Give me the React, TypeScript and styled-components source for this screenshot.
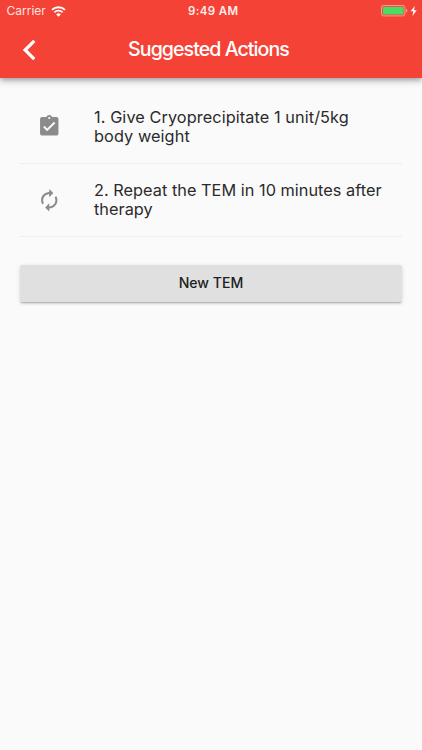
import React from "react";
import styled, { createGlobalStyle } from "styled-components";

const GlobalStyle = createGlobalStyle`
  * { box-sizing: border-box; }
  body { margin: 0; background: #fafafa; font-family: Inter, "Liberation Sans", sans-serif; }
`;

const Screen = styled.div`
  width: 422px;
  height: 750px;
  background: #fafafa;
  overflow: hidden;
`;

const Header = styled.header`
  height: 77.6px;
  background: #f44336;
  color: #fff;
  box-shadow: 0 2px 4px -1px rgba(0, 0, 0, 0.2), 0 4px 5px rgba(0, 0, 0, 0.14), 0 1px 10px rgba(0, 0, 0, 0.12);
`;

const StatusBar = styled.div`
  height: 21px;
  display: grid;
  grid-template-columns: 1fr auto 1fr;
  align-items: center;
  padding: 1px 4px 0 6.5px;
`;

const Carrier = styled.div`
  display: flex;
  align-items: center;
  gap: 5px;
  font-size: 12px;
  line-height: 14px;
  color: rgba(255, 255, 255, 0.88);
`;

const Clock = styled.div`
  padding-left: 2px;
  font-size: 11.5px;
  line-height: 14px;
  font-weight: 600;
  letter-spacing: 0.4px;
  color: rgba(255, 255, 255, 0.92);
`;

const Power = styled.div`
  display: flex;
  justify-content: flex-end;
`;

const NavBar = styled.div`
  height: 57px;
  display: grid;
  grid-template-columns: 58px 1fr 63px;
  align-items: center;
`;

const BackButton = styled.button`
  border: 0;
  padding: 0 0 0 21.5px;
  background: none;
  display: flex;
`;

const Title = styled.h1`
  margin: 0 0 1px;
  text-align: center;
  font-size: 19.6px;
  line-height: 24px;
  font-weight: 500;
  letter-spacing: -0.95px;
`;

const Content = styled.main`
  padding: 12.9px 20px 0;
`;

const Action = styled.div`
  height: 73.3px;
  display: flex;
  align-items: center;
  padding-left: 16.5px;
  border-bottom: 1px solid #eeeeee;
`;

const ActionIcon = styled.svg`
  width: 24.5px;
  height: 24.5px;
  flex: none;
  fill: #8b8b8b;
`;

const ActionText = styled.p<{ $spacing: number }>`
  margin: 1px 0 0 33px;
  font-size: 16.3px;
  line-height: 19.4px;
  letter-spacing: ${(p) => p.$spacing}px;
  color: #2b2b2b;
  white-space: nowrap;
`;

const NewButton = styled.button`
  display: block;
  width: 382px;
  height: 36.7px;
  margin-top: 28.4px;
  padding: 0 0 2px;
  border: 0;
  border-radius: 2px;
  background: #e0e0e0;
  color: #212121;
  font-family: inherit;
  font-size: 14.1px;
  font-weight: 500;
  letter-spacing: 0;
  box-shadow: 0 2px 1px -1px rgba(0, 0, 0, 0.14), 0 2px 2px rgba(0, 0, 0, 0.1), 0 1px 5px rgba(0, 0, 0, 0.1);
`;

const Wifi = () => (
  <svg width="15" height="11" viewBox="0 0 15 11" fill="none" stroke="#fff">
    <path d="M1 3.9a9.3 9.3 0 0 1 13 0" strokeWidth="1.9" />
    <path d="M3.4 6.4a5.8 5.8 0 0 1 8.2 0" strokeWidth="1.8" />
    <path d="M7.5 10.8 5.2 8.4a3.3 3.3 0 0 1 4.6 0Z" fill="#fff" stroke="none" />
  </svg>
);

const Battery = () => (
  <svg width="38" height="12" viewBox="0 0 38 12">
    <rect x="1.5" y="0.5" width="23.4" height="10.4" rx="2" fill="none" stroke="#fff" strokeOpacity="0.45" />
    <rect x="2.8" y="1.8" width="20.8" height="7.8" rx="0.8" fill="#4cd964" />
    <path d="M26 3.8q1.3 .5 1.3 1.9T26 7.6Z" fill="#fff" fillOpacity="0.5" />
    <path d="M34.8 0.9 30.6 6.3h2.7l-.8 4.6 4.2-5.6h-2.7Z" fill="#fff" />
  </svg>
);

export default function App() {
  return (
    <Screen>
      <GlobalStyle />
      <Header>
        <StatusBar>
          <Carrier>Carrier<Wifi /></Carrier>
          <Clock>9:49 AM</Clock>
          <Power><Battery /></Power>
        </StatusBar>
        <NavBar>
          <BackButton aria-label="Back">
            <svg width="14" height="22" viewBox="0 0 14 22" fill="none" stroke="#fff" strokeWidth="3.2">
              <path d="M12.3 1.8 3.1 11l9.2 9.2" />
            </svg>
          </BackButton>
          <Title>Suggested Actions</Title>
        </NavBar>
      </Header>
      <Content>
        <Action>
          <ActionIcon viewBox="0 0 24 24">
            <path d="M19 3h-4.18C14.4 1.84 13.3 1 12 1c-1.3 0-2.4.84-2.82 2H5c-1.1 0-2 .9-2 2v14c0 1.1.9 2 2 2h14c1.1 0 2-.9 2-2V5c0-1.1-.9-2-2-2zm-7 0c.55 0 1 .45 1 1s-.45 1-1 1-1-.45-1-1 .45-1 1-1zm-2 14l-4-4 1.41-1.41L10 14.17l6.59-6.59L18 9l-8 8z" />
          </ActionIcon>
          <ActionText $spacing={0.08}>1. Give Cryoprecipitate 1 unit/5kg<br />body weight</ActionText>
        </Action>
        <Action>
          <ActionIcon viewBox="0 0 24 24">
            <path d="M12 6v3l4-4-4-4v3c-4.42 0-8 3.58-8 8 0 1.57.46 3.03 1.24 4.26L6.7 14.8c-.45-.83-.7-1.79-.7-2.8 0-3.31 2.69-6 6-6zm6.76 1.74L17.3 9.2c.44.84.7 1.79.7 2.8 0 3.31-2.69 6-6 6v-3l-4 4 4 4v-3c4.42 0 8-3.58 8-8 0-1.57-.46-3.03-1.24-4.26z" />
          </ActionIcon>
          <ActionText $spacing={0.03}>2. Repeat the TEM in 10 minutes after<br />therapy</ActionText>
        </Action>
        <NewButton>New TEM</NewButton>
      </Content>
    </Screen>
  );
}
